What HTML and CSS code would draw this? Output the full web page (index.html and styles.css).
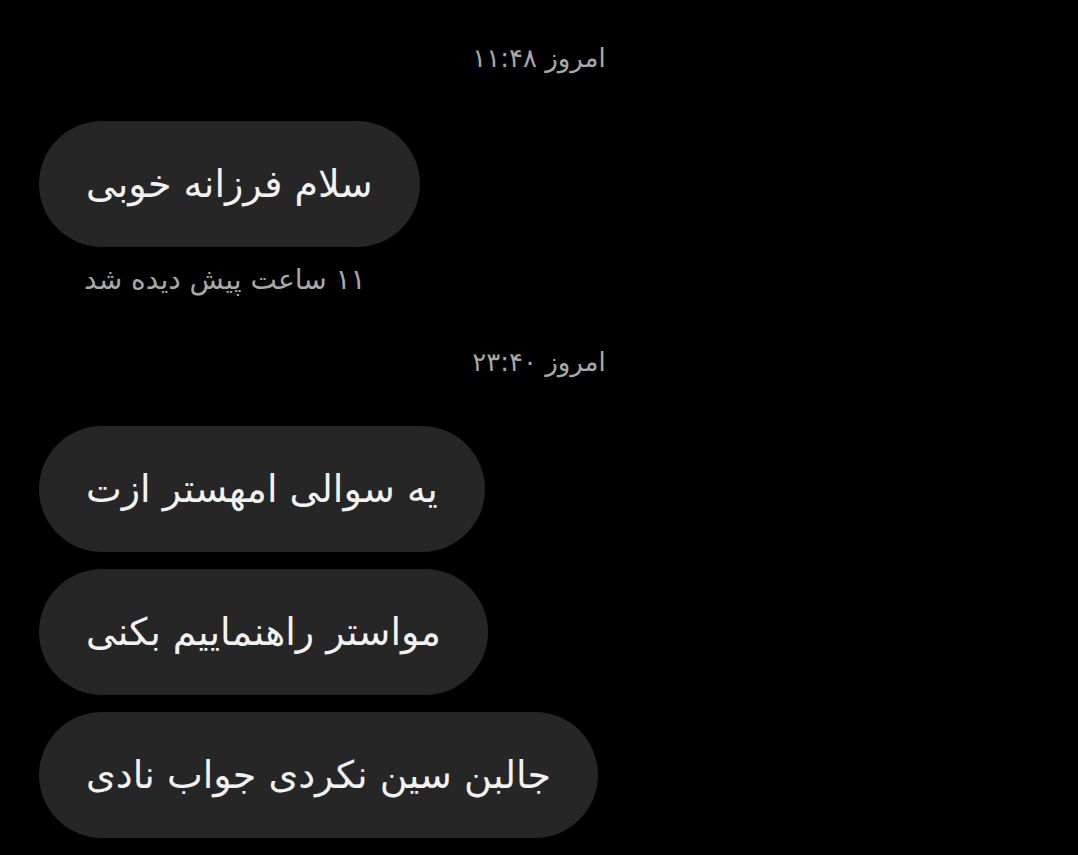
FILE: index.html
```html
<!DOCTYPE html>
<html lang="fa">
<head>
<meta charset="utf-8">
<link rel="stylesheet" href="styles.css">
</head>
<body>
<div class="chat">
  <div class="stamp stamp-first" dir="rtl">امروز ۱۱:۴۸</div>
  <div class="bubble" dir="rtl">سلام فرزانه خوبی</div>
  <div class="seen" dir="rtl">۱۱ ساعت پیش دیده شد</div>
  <div class="stamp stamp-second" dir="rtl">امروز ۲۳:۴۰</div>
  <div class="group">
    <div class="bubble" dir="rtl">یه سوالی امهستر ازت</div>
    <div class="bubble" dir="rtl">مواستر راهنماییم بکنی</div>
    <div class="bubble" dir="rtl">جالبن سین نکردی جواب نادی</div>
  </div>
</div>
</body>
</html>
```

FILE: styles.css
```css
html, body {
  margin: 0;
  padding: 0;
  background: #000;
  height: 100%;
  overflow: hidden;
}
.chat {
  display: flex;
  flex-direction: column;
  align-items: flex-start;
  padding: 38px 39px 0 39px;
  font-family: "DejaVu Sans", "Noto Sans Arabic", sans-serif;
}
.stamp {
  align-self: center;
  color: #a8a8a8;
  font-size: 26px;
  line-height: 40px;
  height: 40px;
}
.bubble {
  background: #262626;
  color: #f2f2f2;
  font-size: 38px;
  line-height: 46px;
  padding: 40px 47px;
  border-radius: 63px;
  white-space: nowrap;
}
.stamp-first + .bubble {
  margin-top: 43px;
}
.seen {
  margin-top: 17px;
  padding-left: 45px;
  color: #a8a8a8;
  font-size: 28px;
  line-height: 32px;
}
.stamp-second {
  margin-top: 46px;
}
.group {
  margin-top: 44px;
  display: flex;
  flex-direction: column;
  align-items: flex-start;
  gap: 17px;
}
```
